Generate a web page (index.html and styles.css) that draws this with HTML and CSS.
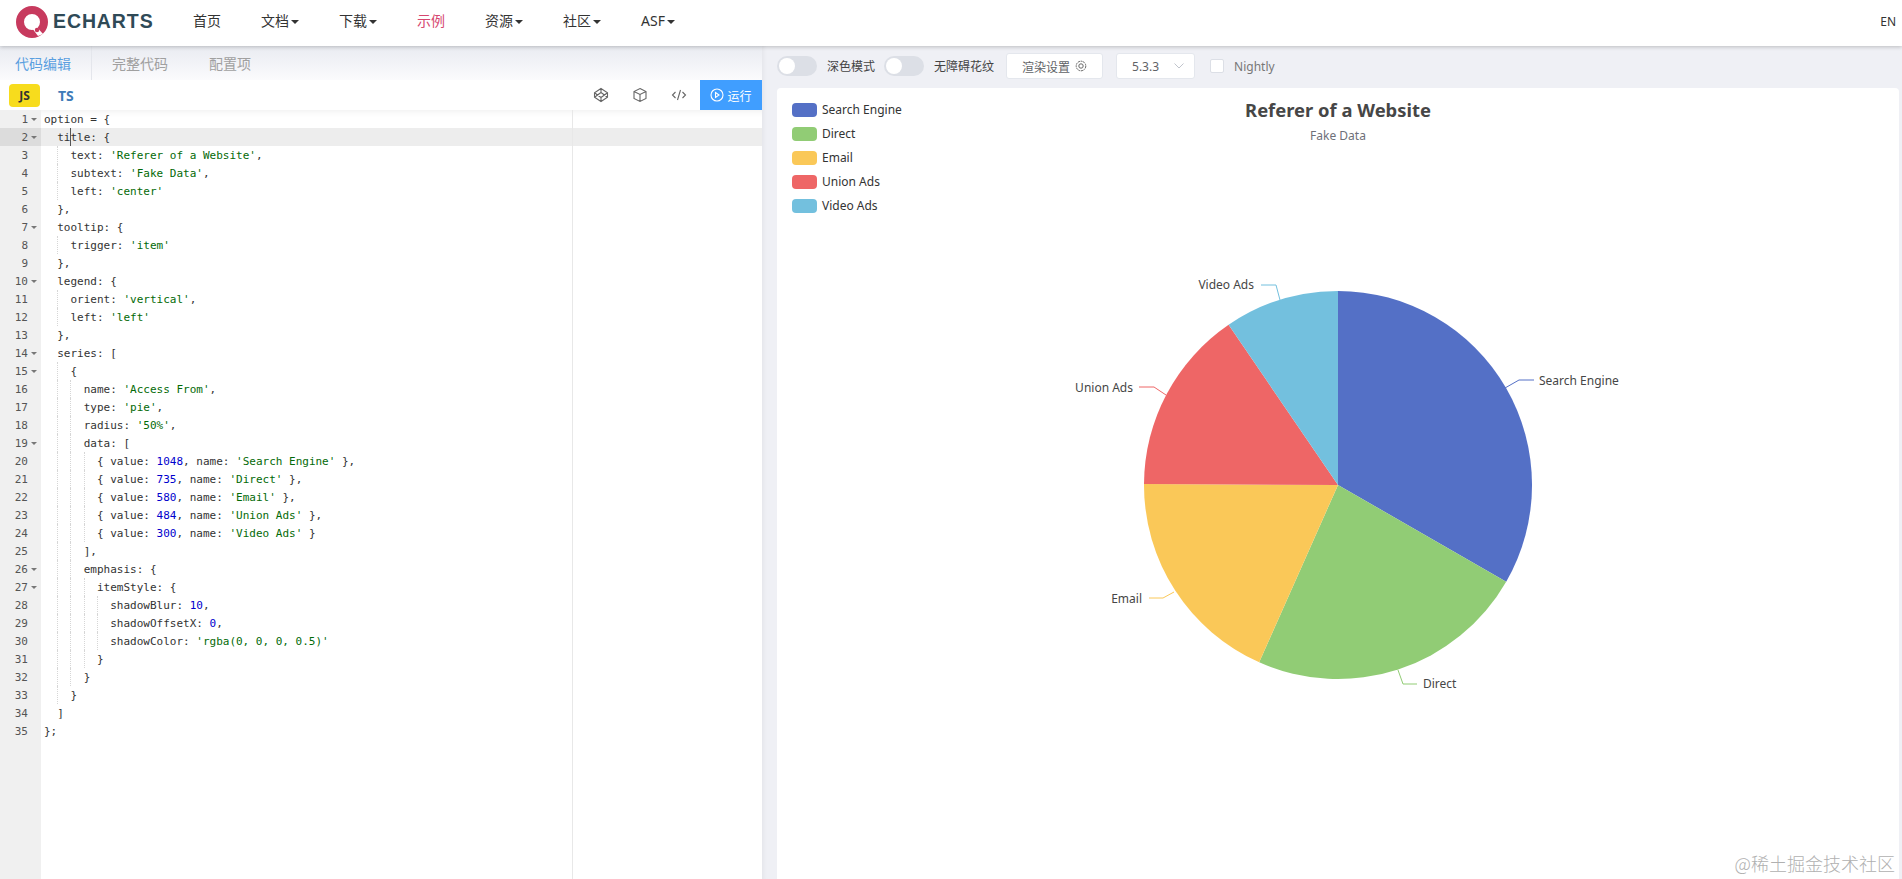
FILE: index.html
```html
<!DOCTYPE html>
<html lang="zh">
<head>
<meta charset="utf-8">
<title>ECharts 示例</title>
<link rel="stylesheet" href="styles.css">
</head>
<body>
<header class="nav">
  <a class="logo">
    <svg class="logo-mark" width="32" height="34" viewBox="0 0 32 34"><circle cx="16" cy="17" r="12" fill="none" stroke="#c73a5e" stroke-width="8"/><path d="M19 20l8 9-5 2-6-8z" fill="#fff"/><circle cx="21" cy="25" r="2.2" fill="#c73a5e"/></svg>
    <span class="logo-text">ECHARTS</span>
  </a>
  <ul class="menu">
    <li>首页</li>
    <li class="caret">文档</li>
    <li class="caret">下载</li>
    <li class="on">示例</li>
    <li class="caret">资源</li>
    <li class="caret">社区</li>
    <li class="caret">ASF</li>
  </ul>
  <span class="lang">EN</span>
</header>
<main class="main">
  <section class="left">
    <div class="tabs">
      <span class="tab active">代码编辑</span>
      <span class="tab">完整代码</span>
      <span class="tab">配置项</span>
    </div>
    <div class="tools">
      <span class="js">JS</span>
      <span class="ts">TS</span>
      <span class="icons">
        <svg width="16" height="16" viewBox="0 0 16 16" fill="none" stroke="#666" stroke-width="1.1"><path d="M8 1.5l6.5 4.2v4.6L8 14.5 1.5 10.300V5.700zM8 1.500v4M8 10.500v4M1.500 5.700L8 10.500l6.500-4.800M1.500 10.300L8 5.500l6.500 4.800"/></svg>
        <svg width="16" height="16" viewBox="0 0 16 16" fill="none" stroke="#666" stroke-width="1.1"><path d="M8 1.500l6 3v7l-6 3-6-3v-7zM2 4.500l6 3 6-3M8 7.500v7"/></svg>
        <svg width="16" height="16" viewBox="0 0 16 16" fill="none" stroke="#666" stroke-width="1.1"><path d="M4.500 5L1.500 8l3 3M11.500 5l3 3-3 3M9.500 3L6.500 13"/></svg>
      </span>
      <button class="run"><svg width="14" height="14" viewBox="0 0 14 14" fill="none" stroke="#fff" stroke-width="1.100"><circle cx="7" cy="7" r="6"/><path d="M5.500 4.500l3.500 2.500-3.500 2.500z"/></svg>运行</button>
    </div>
    <div class="editor">
      <div class="gutter">
        <div class="n f">1</div><div class="n f cur">2</div><div class="n">3</div><div class="n">4</div><div class="n">5</div><div class="n">6</div><div class="n f">7</div><div class="n">8</div><div class="n">9</div><div class="n f">10</div><div class="n">11</div><div class="n">12</div><div class="n">13</div><div class="n f">14</div><div class="n f">15</div><div class="n">16</div><div class="n">17</div><div class="n">18</div><div class="n f">19</div><div class="n">20</div><div class="n">21</div><div class="n">22</div><div class="n">23</div><div class="n">24</div><div class="n">25</div><div class="n f">26</div><div class="n f">27</div><div class="n">28</div><div class="n">29</div><div class="n">30</div><div class="n">31</div><div class="n">32</div><div class="n">33</div><div class="n">34</div><div class="n">35</div>
      </div>
      <div class="code">
        <div class="l">option = {</div>
        <div class="l cur"><i class="s"></i><span class="caretmark">ti</span>tle: {</div>
        <div class="l"><i class="s"></i><i class="g"></i>text: <b>'Referer of a Website'</b>,</div>
        <div class="l"><i class="s"></i><i class="g"></i>subtext: <b>'Fake Data'</b>,</div>
        <div class="l"><i class="s"></i><i class="g"></i>left: <b>'center'</b></div>
        <div class="l"><i class="s"></i>},</div>
        <div class="l"><i class="s"></i>tooltip: {</div>
        <div class="l"><i class="s"></i><i class="g"></i>trigger: <b>'item'</b></div>
        <div class="l"><i class="s"></i>},</div>
        <div class="l"><i class="s"></i>legend: {</div>
        <div class="l"><i class="s"></i><i class="g"></i>orient: <b>'vertical'</b>,</div>
        <div class="l"><i class="s"></i><i class="g"></i>left: <b>'left'</b></div>
        <div class="l"><i class="s"></i>},</div>
        <div class="l"><i class="s"></i>series: [</div>
        <div class="l"><i class="s"></i><i class="g"></i>{</div>
        <div class="l"><i class="s"></i><i class="g"></i><i class="g"></i>name: <b>'Access From'</b>,</div>
        <div class="l"><i class="s"></i><i class="g"></i><i class="g"></i>type: <b>'pie'</b>,</div>
        <div class="l"><i class="s"></i><i class="g"></i><i class="g"></i>radius: <b>'50%'</b>,</div>
        <div class="l"><i class="s"></i><i class="g"></i><i class="g"></i>data: [</div>
        <div class="l"><i class="s"></i><i class="g"></i><i class="g"></i><i class="g"></i>{ value: <u>1048</u>, name: <b>'Search Engine'</b> },</div>
        <div class="l"><i class="s"></i><i class="g"></i><i class="g"></i><i class="g"></i>{ value: <u>735</u>, name: <b>'Direct'</b> },</div>
        <div class="l"><i class="s"></i><i class="g"></i><i class="g"></i><i class="g"></i>{ value: <u>580</u>, name: <b>'Email'</b> },</div>
        <div class="l"><i class="s"></i><i class="g"></i><i class="g"></i><i class="g"></i>{ value: <u>484</u>, name: <b>'Union Ads'</b> },</div>
        <div class="l"><i class="s"></i><i class="g"></i><i class="g"></i><i class="g"></i>{ value: <u>300</u>, name: <b>'Video Ads'</b> }</div>
        <div class="l"><i class="s"></i><i class="g"></i><i class="g"></i>],</div>
        <div class="l"><i class="s"></i><i class="g"></i><i class="g"></i>emphasis: {</div>
        <div class="l"><i class="s"></i><i class="g"></i><i class="g"></i><i class="g"></i>itemStyle: {</div>
        <div class="l"><i class="s"></i><i class="g"></i><i class="g"></i><i class="g"></i><i class="g"></i>shadowBlur: <u>10</u>,</div>
        <div class="l"><i class="s"></i><i class="g"></i><i class="g"></i><i class="g"></i><i class="g"></i>shadowOffsetX: <u>0</u>,</div>
        <div class="l"><i class="s"></i><i class="g"></i><i class="g"></i><i class="g"></i><i class="g"></i>shadowColor: <b>'rgba(0, 0, 0, 0.5)'</b></div>
        <div class="l"><i class="s"></i><i class="g"></i><i class="g"></i><i class="g"></i>}</div>
        <div class="l"><i class="s"></i><i class="g"></i><i class="g"></i>}</div>
        <div class="l"><i class="s"></i><i class="g"></i>}</div>
        <div class="l"><i class="s"></i>]</div>
        <div class="l">};</div>
      </div>
      <div class="margin"></div>
    </div>
  </section>
  <section class="right">
    <div class="bar">
      <span class="switch"></span><span class="lab first">深色模式</span>
      <span class="switch"></span><span class="lab">无障碍花纹</span>
      <button class="btn">渲染设置<svg width="12" height="12" viewBox="0 0 12 12" fill="none" stroke="#666" stroke-width="1"><circle cx="6" cy="6" r="4.800" stroke-dasharray="2 .7"/><circle cx="6" cy="6" r="2.200"/></svg></button>
      <span class="select">5.3.3<svg width="10" height="6" viewBox="0 0 10 6" fill="none" stroke="#c0c4cc"><path d="M.5.500L5 5 9.500.5"/></svg></span>
      <span class="check"></span><span class="night">Nightly</span>
    </div>
    <div class="card">
      <svg class="chart" width="1122" height="791" viewBox="0 0 1122 791">
        <path fill="#5470c6" d="M561 397V203A194 194 0 0 1 729.200 493.700Z"/>
        <path fill="#91cc75" d="M561 397L729.200 493.700A194 194 0 0 1 482.200 574.300Z"/>
        <path fill="#fac858" d="M561 397L482.200 574.300A194 194 0 0 1 367 396Z"/>
        <path fill="#ee6666" d="M561 397L367 396A194 194 0 0 1 451.600 236.800Z"/>
        <path fill="#73c0de" d="M561 397L451.600 236.800A194 194 0 0 1 561 203Z"/>
        <g fill="none">
          <path stroke="#5470c6" d="M728 300L742 292H757"/>
          <path stroke="#91cc75" d="M621 582L626 596H640"/>
          <path stroke="#fac858" d="M397 504L386 510H372"/>
          <path stroke="#ee6666" d="M389 307L377 299H362"/>
          <path stroke="#73c0de" d="M503 212L499 197H484"/>
        </g>
        <g class="lbl">
          <text x="762" y="297">Search Engine</text>
          <text x="646" y="600">Direct</text>
          <text x="365" y="515" text-anchor="end">Email</text>
          <text x="356" y="304" text-anchor="end">Union Ads</text>
          <text x="477" y="201" text-anchor="end">Video Ads</text>
        </g>
        <text class="title" x="561" y="29" text-anchor="middle">Referer of a Website</text>
        <text class="sub" x="561" y="52" text-anchor="middle">Fake Data</text>
        <g class="leg">
          <rect x="15" y="15" width="25" height="14" rx="4" fill="#5470c6"/><text x="45" y="25.500">Search Engine</text>
          <rect x="15" y="39" width="25" height="14" rx="4" fill="#91cc75"/><text x="45" y="49.500">Direct</text>
          <rect x="15" y="63" width="25" height="14" rx="4" fill="#fac858"/><text x="45" y="73.500">Email</text>
          <rect x="15" y="87" width="25" height="14" rx="4" fill="#ee6666"/><text x="45" y="97.500">Union Ads</text>
          <rect x="15" y="111" width="25" height="14" rx="4" fill="#73c0de"/><text x="45" y="121.500">Video Ads</text>
        </g>
      </svg>
    </div>
    <span class="mark">@稀土掘金技术社区</span>
  </section>
</main>
</body>
</html>
```
FILE: styles.css
```css
* { box-sizing: border-box; }
html, body { margin: 0; height: 100%; overflow: hidden; }
body { font-family: "Noto Sans", "Noto Sans CJK SC", sans-serif; font-size: 12px; color: #333; background: #fff; display: flex; flex-direction: column; }

.nav { height: 46px; flex: none; display: flex; align-items: center; background: #fff; box-shadow: 0 1px 4px rgba(0,0,0,.22); position: relative; z-index: 2; padding-left: 16px; padding-right: 6px; }
.logo { display: flex; align-items: center; gap: 5px; width: 157px; margin-top: -3px; }
.logo-text { font: bold 19.5px "Liberation Sans", sans-serif; letter-spacing: .9px; color: #2f4a57; }
.menu { list-style: none; margin: 0; padding: 0; display: flex; gap: 40px; font-size: 14px; line-height: 20px; color: #333; flex: 1; margin-top: -4px; margin-left: 20px; }
.menu .on { color: #d6476f; }
.caret::after { content: ""; display: inline-block; margin-left: 2px; vertical-align: 2px; border: 4px solid transparent; border-top-color: #333; border-bottom: 0; }
.lang { font-size: 12px; color: #333; margin-top: -4px; }

.main { flex: 1; min-height: 0; display: flex; }
.left { width: 762px; flex: none; display: flex; flex-direction: column; background: #fff; }
.tabs { height: 34px; flex: none; display: flex; background: linear-gradient(#e9ebf1, #fbfbfd); }
.tab { width: 96px; padding-left: 20px; line-height: 36px; font-size: 14px; color: #a0a0a0; }
.tab:first-child { width: 92px; padding-left: 15px; border-right: 1px solid #e4e6ec; }
.tab:last-child { padding-left: 21px; }
.tab.active { color: #5a9fe0; }

.tools { height: 30px; flex: none; display: flex; align-items: center; background: #fff; padding-left: 9px; }
.js { width: 31px; height: 23px; background: #f7dc1d; border-radius: 4px; text-align: center; font: bold 12px/23px "Noto Sans", sans-serif; color: #333; }
.ts { margin-left: 18px; font-weight: bold; font-size: 14px; color: #3f7bb8; }
.icons { margin-left: auto; display: flex; gap: 23px; margin-right: 13px; color: #666; }
.run { width: 62px; height: 30px; border: 0; background: #409eff; color: #fff; font: 12px "Noto Sans CJK SC", sans-serif; display: flex; align-items: center; justify-content: center; gap: 3px; padding: 0; }

.editor { flex: 1; min-height: 0; display: flex; position: relative; font: 11px/20px "DejaVu Sans Mono", monospace; color: #333; }
.gutter { width: 41px; flex: none; background: #f0f0f0; color: #555; }
.n { height: 18px; padding-right: 13px; text-align: right; position: relative; }
.n.cur { background: #dcdcdc; }
.n.f::after { content: ""; position: absolute; right: 4px; top: 8px; border: 3px solid transparent; border-top-color: #777; border-bottom: 0; }
.code { flex: 1; min-width: 0; box-shadow: inset 0 8px 6px -6px rgba(0,0,0,.06); }
.l { height: 18px; padding-left: 3px; white-space: pre; display: flex; }
.l.cur { background: #ededed; }
.l i { display: block; width: 13.240px; flex: none; }
.l i.g { border-left: 1px dotted #d6d6d6; }
.l b { font-weight: normal; color: #036a07; }
.l u { text-decoration: none; color: #0000cd; }
.caretmark { border-right: 1px solid #555; margin-right: -1px; }
.margin { position: absolute; left: 572px; top: 0; bottom: 0; width: 1px; background: #e8e8e8; }

.right { flex: 1; min-width: 0; position: relative; display: flex; flex-direction: column; background: #eff0f5; padding: 0 3px 0 15px; box-shadow: inset 6px 0 6px -6px rgba(0,0,0,.08); }
.bar { height: 42px; flex: none; display: flex; align-items: center; padding-bottom: 2px; }
.switch { width: 40px; height: 20px; border-radius: 10px; background: #dcdfe6; position: relative; flex: none; }
.switch::after { content: ""; position: absolute; left: 2px; top: 2px; width: 16px; height: 16px; border-radius: 50%; background: #fff; }
.lab { margin-left: 10px; color: #444; }
.lab.first { margin-right: 9px; }
.btn { margin-left: 12px; width: 97px; height: 26px; background: #fff; border: 1px solid #e4e7ed; border-radius: 3px; color: #606266; font: 12px "Noto Sans CJK SC", sans-serif; display: flex; align-items: center; justify-content: center; gap: 5px; padding: 0; }
.select { margin-left: 13px; width: 79px; height: 26px; background: #fff; border: 1px solid #e4e7ed; border-radius: 3px; color: #606266; display: flex; align-items: center; justify-content: space-between; padding: 0 10px 0 15px; }
.check { margin-left: 15px; width: 14px; height: 14px; background: #fff; border: 1px solid #dcdfe6; border-radius: 2px; }
.night { margin-left: 10px; color: #777; }
.card { flex: 1; min-height: 0; background: #fff; border-radius: 4px 4px 0 0; overflow: hidden; }
.chart { display: block; }
.chart text { font-family: "Noto Sans", sans-serif; font-size: 12px; }
.lbl text { fill: #464646; }
.leg text { fill: #333; }
.chart .title { font-size: 18.400px; font-weight: bold; fill: #464646; }
.chart .sub { fill: #6e7079; }
.mark { position: absolute; right: 7px; bottom: 5px; font: 300 18px/22px "Noto Sans CJK SC", sans-serif; color: #b0b0b0; }
```
